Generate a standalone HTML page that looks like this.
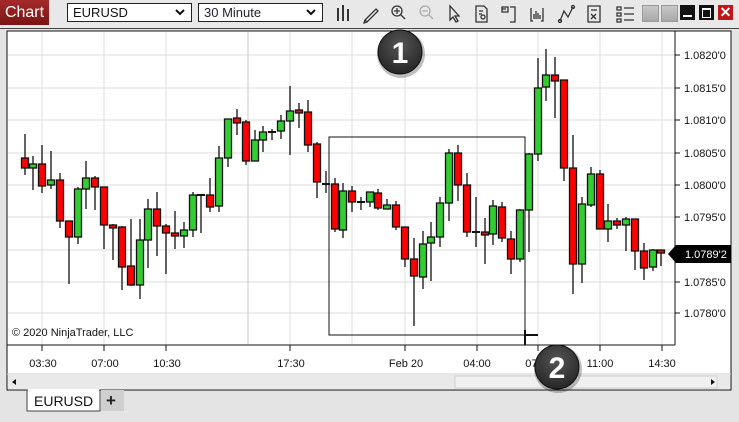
<!DOCTYPE html>
<html><head><meta charset="utf-8"><style>
body{margin:0;width:739px;height:422px;overflow:hidden;background:#e4e4e4;font-family:"Liberation Sans",sans-serif;position:relative}
.abs{position:absolute}
.chartbtn{left:0;top:0;width:49px;height:25px;background:linear-gradient(#a52a2a,#7a1414);color:#fff;font-size:16px;line-height:25px;text-align:center}
.dd{top:3px;height:17px;background:#fff;border:1px solid #222;font-size:13px;line-height:17px;padding-left:5px;box-sizing:content-box}
.wb{top:5px;width:15px;height:15px}
.chev{position:absolute;right:6px;top:5px}
</style></head><body>
<div class="abs" style="left:0;top:0;width:739px;height:28px;background:#e8e8e8;border-bottom:1px solid #444"></div>
<div class="abs chartbtn">Chart</div>
<div class="abs dd" style="left:67px;width:118px;color:#111">EURUSD<svg class="chev" width="10" height="7"><path d="M1 1 L5 5 L9 1" fill="none" stroke="#111" stroke-width="2"/></svg></div>
<div class="abs dd" style="left:198px;width:118px;color:#223">30 Minute<svg class="chev" width="10" height="7"><path d="M1 1 L5 5 L9 1" fill="none" stroke="#111" stroke-width="2"/></svg></div>
<svg class="abs" style="left:330px;top:2px" width="310" height="24" fill="none" stroke="#333" stroke-width="1.3">
<g stroke-width="2"><line x1="8" y1="6" x2="8" y2="19"/><line x1="13" y1="3" x2="13" y2="19"/><line x1="18" y1="7" x2="18" y2="19"/></g>
<path d="M35 18 L46 7 L48 9 L37 20 Z M35 18 L34 21 L37 20"/>
<circle cx="67" cy="9" r="5"/><path d="M71 13 L75 17 M64 9 H70 M67 6 V12"/>
<g stroke="#aaa"><circle cx="95" cy="9" r="5"/><path d="M99 13 L103 17 M92 9 H98"/></g>
<path d="M120 4 L120 18 L123 15 L126 20 L128 19 L125 14 L129 14 Z"/>
<path d="M146 4 H154 L157 7 V20 H146 Z M149 9 H153 M149 12 H152"/><circle cx="153" cy="15" r="2"/>
<path d="M172 5 H178 V10 H172 Z M172 7 H176 M180 5 H185 V20 H180"/>
<path d="M201 6 V19 H203 M213 6 V19 H211 M204 12 V17 M206 9 V17 M208 11 V17 M210 13 V17" stroke-width="1.3"/>
<path d="M230 19 L234 9 L238 15 L243 5"/><circle cx="230" cy="19" r="1.5"/><circle cx="243" cy="5" r="1.5"/>
<path d="M258 4 H270 V20 H258 Z M261 8 H267 M261 12 L266 17 M266 12 L261 17"/>
<path d="M287 5 H291 V8 H287 Z M287 11 H291 V14 H287 Z M287 17 H291 V20 H287 Z M294 6 H304 M294 12 H304 M294 18 H304"/>
</svg>
<div class="abs wb" style="left:642px;background:linear-gradient(#c8c8c8,#a8a8a8);border:1px solid #999"></div>
<div class="abs wb" style="left:661px;background:linear-gradient(#c8c8c8,#a8a8a8);border:1px solid #999"></div>
<div class="abs wb" style="left:680px;background:#111"><div style="position:absolute;left:3px;top:10px;width:9px;height:2px;background:#fff"></div></div>
<div class="abs wb" style="left:699px;background:#111"><div style="position:absolute;left:3px;top:3px;width:7px;height:7px;border:1px solid #fff;border-top-width:2px"></div></div>
<div class="abs wb" style="left:718px;background:#c01818;color:#fff;font-weight:bold;font-size:14px;line-height:15px;text-align:center">✕</div>

<svg class="abs" style="left:0;top:0" width="739" height="422">
<rect x="7" y="31" width="724" height="359" fill="#fff" stroke="#111" stroke-width="1"/>
<g stroke="#e2e2e2" stroke-width="1.2">
<line x1="8" y1="55" x2="675" y2="55"/><line x1="8" y1="88" x2="675" y2="88"/><line x1="8" y1="120" x2="675" y2="120"/><line x1="8" y1="153" x2="675" y2="153"/><line x1="8" y1="185" x2="675" y2="185"/><line x1="8" y1="217" x2="675" y2="217"/><line x1="8" y1="250" x2="675" y2="250"/><line x1="8" y1="282" x2="675" y2="282"/><line x1="8" y1="313" x2="675" y2="313"/>
<line x1="42" y1="32" x2="42" y2="344"/><line x1="104" y1="32" x2="104" y2="344"/><line x1="166" y1="32" x2="166" y2="344"/><line x1="290" y1="32" x2="290" y2="344"/><line x1="352" y1="32" x2="352" y2="344"/><line x1="405" y1="32" x2="405" y2="344"/><line x1="477" y1="32" x2="477" y2="344"/><line x1="538" y1="32" x2="538" y2="344"/><line x1="600" y1="32" x2="600" y2="344"/><line x1="662" y1="32" x2="662" y2="344"/>
</g>
<line x1="248" y1="32" x2="248" y2="344" stroke="#c8c8c8"/>
<line x1="675" y1="31" x2="675" y2="345" stroke="#111"/>
<line x1="7" y1="345" x2="675" y2="345" stroke="#111"/>
<g stroke="#111"><line x1="42" y1="345" x2="42" y2="351"/><line x1="104" y1="345" x2="104" y2="351"/><line x1="166" y1="345" x2="166" y2="351"/><line x1="290" y1="345" x2="290" y2="351"/><line x1="405" y1="345" x2="405" y2="351"/><line x1="477" y1="345" x2="477" y2="351"/><line x1="538" y1="345" x2="538" y2="351"/><line x1="600" y1="345" x2="600" y2="351"/><line x1="662" y1="345" x2="662" y2="351"/>
<line x1="675" y1="55" x2="680" y2="55"/><line x1="675" y1="88" x2="680" y2="88"/><line x1="675" y1="120" x2="680" y2="120"/><line x1="675" y1="153" x2="680" y2="153"/><line x1="675" y1="185" x2="680" y2="185"/><line x1="675" y1="217" x2="680" y2="217"/><line x1="675" y1="282" x2="680" y2="282"/><line x1="675" y1="313" x2="680" y2="313"/></g>
<g font-size="11" fill="#111">
<text x="684" y="59">1.0820'0</text><text x="684" y="92">1.0815'0</text><text x="684" y="124">1.0810'0</text><text x="684" y="157">1.0805'0</text><text x="684" y="189">1.0800'0</text><text x="684" y="221">1.0795'0</text><text x="684" y="286">1.0785'0</text><text x="684" y="317">1.0780'0</text>
<g text-anchor="middle"><text x="43" y="367">03:30</text><text x="105" y="367">07:00</text><text x="167" y="367">10:30</text><text x="291" y="367">17:30</text><text x="406" y="367">Feb 20</text><text x="477" y="367">04:00</text><text x="539" y="367">07:00</text><text x="600" y="367">11:00</text><text x="662" y="367">14:30</text></g>
<text x="12" y="336">© 2020 NinjaTrader, LLC</text>
</g>
<path d="M668 254 L676 245 H731 V263 H676 Z" fill="#000"/>
<text x="685" y="258" font-size="11" fill="#fff">1.0789'2</text>
<rect x="329" y="137" width="196" height="198" fill="none" stroke="#111"/>
<line x1="525" y1="335" x2="538" y2="335" stroke="#111" stroke-width="2"/>
<line x1="525" y1="330" x2="525" y2="345" stroke="#111" stroke-width="2"/>
<g id="c" stroke="#111" stroke-width="1.3"></g>
<rect x="8" y="375" width="722" height="14" fill="#e9e9e9"/>
<line x1="7" y1="374" x2="731" y2="374" stroke="#ccc"/>
<rect x="455" y="376" width="262" height="12" fill="#f0f0f0" stroke="#d0d0d0"/>
<path d="M16 379 L12 382 L16 385 Z" fill="#111"/>
<path d="M711 379 L715 382 L711 385 Z" fill="#111"/>
<rect x="27" y="390" width="73" height="21" fill="#fff" stroke="#444"/>
<line x1="28" y1="390" x2="99" y2="390" stroke="#fff" stroke-width="2"/>
<text x="34" y="406" font-size="14" fill="#111">EURUSD</text>
<rect x="101" y="390" width="23" height="21" fill="#cfcfcf"/>
<text x="106" y="406" font-size="17" font-weight="bold" fill="#222">+</text>
<defs><radialGradient id="bg" cx="0.5" cy="0.35" r="0.6"><stop offset="0" stop-color="#555"/><stop offset="1" stop-color="#2a2a2a"/></radialGradient></defs>
<circle cx="401" cy="54" r="24" fill="#000" opacity="0.25"/>
<circle cx="400" cy="52" r="22" fill="url(#bg)" stroke="#111"/>
<text x="400" y="63" font-size="30" font-weight="bold" fill="#fff" text-anchor="middle">1</text>
<circle cx="558" cy="369" r="24" fill="#000" opacity="0.25"/>
<circle cx="557" cy="367" r="22" fill="url(#bg)" stroke="#111"/>
<text x="557" y="378" font-size="30" font-weight="bold" fill="#fff" text-anchor="middle">2</text>
</svg>
<script>
var d=[[25,134,175,158,168,'r'],[33,156,190,164,168,'g'],[42,145,193,164,186,'r'],[51,151,189,180,185,'g'],[60,173,228,180,221,'r'],[69,221,284,221,237,'r'],[78,187,244,189,237,'g'],[86,161,209,178,189,'g'],[95,176,210,178,187,'r'],[104,187,249,187,225,'r'],[113,224,260,225,228,'r'],[122,226,290,227,267,'r'],[131,219,286,266,285,'r'],[140,219,299,240,285,'g'],[148,199,268,209,240,'g'],[157,192,256,209,226,'r'],[166,224,274,226,233,'r'],[175,211,249,233,235,'r'],[184,222,248,230,236,'g'],[193,192,237,195,230,'g'],[201,195,233,195,195,'d'],[210,178,212,195,207,'r'],[219,146,212,158,206,'g'],[228,119,167,119,158,'g'],[237,109,135,118,123,'r'],[246,120,165,122,161,'r'],[255,130,161,140,161,'g'],[263,126,152,132,140,'g'],[272,129,140,132,132,'d'],[281,115,139,121,131,'g'],[290,86,155,111,121,'g'],[299,103,128,110,112,'r'],[308,100,152,112,145,'r'],[317,142,198,144,182,'r'],[326,171,193,184,184,'d'],[335,178,232,184,229,'r'],[343,183,238,191,230,'g'],[352,186,212,191,202,'r'],[361,197,210,202,202,'d'],[370,192,207,192,202,'g'],[378,189,210,193,208,'r'],[387,199,209,205,209,'g'],[396,201,230,205,227,'r'],[405,227,267,227,259,'r'],[414,238,326,259,276,'r'],[423,231,289,244,277,'g'],[431,222,281,237,243,'g'],[440,197,247,203,237,'g'],[449,149,221,153,203,'g'],[458,145,201,153,185,'r'],[467,173,237,185,232,'r'],[476,197,247,232,232,'d'],[485,218,264,232,234,'r'],[493,200,245,206,234,'g'],[502,202,242,207,238,'r'],[511,231,274,239,259,'r'],[520,209,262,210,259,'g'],[529,153,252,154,210,'g'],[538,58,161,88,154,'g'],[546,49,101,75,87,'g'],[555,57,118,75,81,'r'],[564,80,181,80,168,'r'],[573,135,294,168,264,'r'],[582,197,283,204,264,'g'],[591,167,207,174,205,'g'],[600,170,229,174,229,'r'],[608,204,242,221,229,'g'],[617,218,229,221,225,'r'],[626,217,251,219,225,'g'],[635,219,270,219,251,'r'],[644,243,280,251,268,'r'],[653,249,271,250,267,'g'],[661,250,266,250,253,'r']];
var s='';d.forEach(function(c){s+='<line x1="'+c[0]+'" y1="'+c[1]+'" x2="'+c[0]+'" y2="'+c[2]+'"/>';if(c[5]=='d'){s+='<line x1="'+(c[0]-4)+'" y1="'+c[3]+'" x2="'+(c[0]+4)+'" y2="'+c[3]+'" stroke-width="2"/>';}else{var h=Math.max(c[4]-c[3],3);s+='<rect x="'+(c[0]-3.5)+'" y="'+c[3]+'" width="7" height="'+h+'" fill="'+(c[5]=='r'?'#ff0000':'#32cd32')+'"/>';}});
document.getElementById('c').innerHTML=s;
</script>
</body></html>
